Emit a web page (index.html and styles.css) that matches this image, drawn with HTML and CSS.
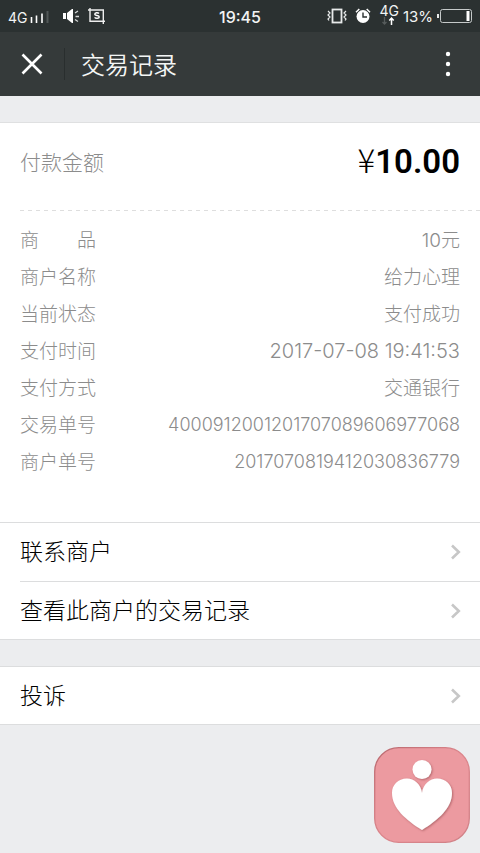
FILE: index.html
```html
<!DOCTYPE html>
<html lang="zh-CN">
<head>
<meta charset="utf-8">
<meta name="viewport" content="width=device-width, initial-scale=1">
<title>交易记录</title>
<link rel="stylesheet" href="styles.css">
</head>
<body>
<div class="status">
  <div class="status-side">
    <span class="network">4G</span>
    <svg class="signal" width="20" height="12" viewBox="0 0 20 12" aria-hidden="true"><path d="M1.500 6v6M6.500 4.500V12M12 2.500V12" stroke="#fff" stroke-width="1.600"/><path d="M17.500 0v12" stroke="#515757" stroke-width="2"/></svg>
    <svg class="speaker" width="18" height="16" viewBox="0 0 18 16" aria-hidden="true"><path d="M1 5h3v6H1zM5 5l5-4h1v14h-1l-5-4z" fill="#fff"/><path d="M13 5l3-2M13.500 8.500H17M13 11.500l3 2" stroke="#d5d8d8" stroke-width="1.300"/></svg>
    <svg width="18" height="16" viewBox="0 0 18 16" aria-hidden="true"><path d="M0 2h15.300v14M2 0v13.300h15" fill="none" stroke="#eee" stroke-width="1.400"/><path d="M11 5.500C10 4.300 6.800 4.300 6.800 6.200c0 1.800 4.400.9 4.400 2.800 0 1.800-3.600 1.700-4.600.4" fill="none" stroke="#fff" stroke-width="1.500"/></svg>
  </div>
  <time class="clock">19:45</time>
  <div class="status-side status-right">
    <svg width="20" height="16" viewBox="0 0 20 16" aria-hidden="true"><rect x="5.500" y="1.500" width="9" height="13" fill="none" stroke="#e8eaea" stroke-width="1.800"/><path d="M1 3l2 2-2 2 2 2-2 2 1 1.500M19 3l-2 2 2 2-2 2 2 2-1 1.500" fill="none" stroke="#e8eaea" stroke-width="1.200"/></svg>
    <svg class="alarm" width="16" height="16" viewBox="0 0 16 16" aria-hidden="true"><circle cx="8" cy="8.500" r="6.500" fill="#fff"/><path d="M1 4.200L4.300 1M15 4.200L11.700 1" stroke="#fff" stroke-width="1.500"/><path d="M8 4.500V9h4" fill="none" stroke="#2b3131" stroke-width="1.400"/></svg>
    <span class="data"><span class="data-label">4G</span><svg width="14" height="8" viewBox="0 0 14 8" aria-hidden="true"><path d="M2.500 0v7M.5 5l2 2 2-2" fill="none" stroke="#565c5c" stroke-width="1.300"/><path d="M9.500 8V1M7.300 3.500l2.200-2.400 2.200 2.400" fill="none" stroke="#fff" stroke-width="1.500"/></svg></span>
    <span class="percent">13%</span>
    <svg width="35" height="14" viewBox="0 0 35 14" aria-hidden="true"><path d="M1 5v4" stroke="#e8eaea" stroke-width="2"/><rect x="3.500" y=".5" width="31" height="13" rx="2" fill="none" stroke="#c5c9c9"/><path d="M31 2v10" stroke="#fff" stroke-width="3"/></svg>
  </div>
</div>
<header class="nav">
  <button class="close" aria-label="关闭"><svg width="22" height="22" viewBox="0 0 22 22"><path d="M1.500 1.500l19 19M20.500 1.500l-19 19" stroke="#fff" stroke-width="2.600"/></svg></button>
  <h1>交易记录</h1>
  <button class="more" aria-label="更多"><svg width="6" height="26" viewBox="0 0 6 26" fill="#fff"><circle cx="3" cy="3" r="2.200"/><circle cx="3" cy="13" r="2.200"/><circle cx="3" cy="23" r="2.200"/></svg></button>
</header>
<main>
  <section class="bill">
    <div class="total"><span>付款金额</span><strong><span class="yen">¥</span>10.00</strong></div>
    <svg class="divider" height="1" aria-hidden="true"><path d="M0 .5H2000" stroke="#dedede" stroke-dasharray="4 4"/></svg>
    <dl>
      <div class="row"><dt><span>商</span><span>品</span></dt><dd>10元</dd></div>
      <div class="row"><dt>商户名称</dt><dd>给力心理</dd></div>
      <div class="row"><dt>当前状态</dt><dd>支付成功</dd></div>
      <div class="row"><dt>支付时间</dt><dd class="digits">2017-07-08 19:41:53</dd></div>
      <div class="row"><dt>支付方式</dt><dd>交通银行</dd></div>
      <div class="row"><dt>交易单号</dt><dd class="digits serial">4000912001201707089606977068</dd></div>
      <div class="row"><dt>商户单号</dt><dd class="digits serial">2017070819412030836779</dd></div>
    </dl>
  </section>
  <nav class="links">
    <a href="#contact"><span>联系商户</span><svg width="12" height="16" viewBox="0 0 12 16" aria-hidden="true"><path d="M2 1.500L8.800 8 2 14.500" fill="none" stroke="#c7c7c7" stroke-width="2.600"/></svg></a>
    <a href="#records"><span>查看此商户的交易记录</span><svg width="12" height="16" viewBox="0 0 12 16" aria-hidden="true"><path d="M2 1.500L8.800 8 2 14.500" fill="none" stroke="#c7c7c7" stroke-width="2.600"/></svg></a>
  </nav>
  <nav class="links complaint">
    <a href="#complaint"><span>投诉</span><svg width="12" height="16" viewBox="0 0 12 16" aria-hidden="true"><path d="M2 1.500L8.800 8 2 14.500" fill="none" stroke="#c7c7c7" stroke-width="2.600"/></svg></a>
  </nav>
</main>
<svg class="badge" width="96" height="96" viewBox="0 0 96 96" role="img" aria-label="爱心">
  <defs><filter id="shade" x="-20%" y="-20%" width="140%" height="140%"><feDropShadow dx="1" dy="1" stdDeviation="1.200" flood-color="#8d4449" flood-opacity=".6"/></filter>
  <linearGradient id="rim" x1="0" y1="0" x2="1" y2="1"><stop offset="0" stop-color="#b9686e"/><stop offset=".5" stop-color="#dc868c"/><stop offset="1" stop-color="#d08086"/></linearGradient></defs>
  <rect x=".7" y=".7" width="94.600" height="94.600" rx="24" fill="#ec9aa0" stroke="url(#rim)" stroke-width="1.300"/>
  <g fill="#fff" filter="url(#shade)"><circle cx="48" cy="22.500" r="9.500"/><path d="M48 46C47 37 40 31.500 33 31.500C24 31.500 18 38 18 46C18 61 32 73 48 83C64 73 78 61 78 46C78 38 72 31.500 63 31.500C56 31.500 49 37 48 46Z"/></g>
</svg>
</body>
</html>
```
FILE: styles.css
```css
* { box-sizing: border-box; }

body {
  margin: 0;
  min-height: 100vh;
  background: #ecedef;
  color: #000;
  font-family: Inter, "Noto Sans CJK SC", sans-serif;
}

button { border: 0; padding: 0; background: none; }
svg { display: block; flex: none; }

.status {
  display: grid;
  grid-template-columns: 1fr auto 1fr;
  align-items: center;
  height: 32px;
  padding: 0 8px;
  background: #2b3131;
  color: #f2f4f4;
}
.status-side { display: flex; align-items: center; }
.status-right { justify-content: flex-end; gap: 4px; }
.network { font-size: 14px; line-height: 16px; padding-top: 4px; }
.signal { margin: 2px 12px 0 2px; }
.speaker { margin-right: 8px; }
.clock { padding-top: 2px; font-size: 16px; font-weight: 500; }
.alarm { margin: 0 4px; }
.data { display: flex; flex-direction: column; align-items: center; padding-bottom: 2px; }
.data-label { font-size: 14px; line-height: 12px; }
.percent { font-size: 15px; }

.nav {
  display: flex;
  align-items: center;
  height: 64px;
  background: #353a3a;
  color: #f4f6f5;
}
.close {
  display: grid;
  place-items: center;
  width: 65px;
  height: 32px;
  border-right: 1px solid #292e2e;
}
.nav h1 {
  flex: 1;
  margin: 0 0 0 16px;
  padding-top: 4px;
  font-size: 24px;
  line-height: 32px;
  font-weight: 350;
}
.more { padding: 0 29px; }

.bill {
  margin-top: 26px;
  padding-bottom: 32px;
  background: #fff;
  border-top: 1px solid #dfe0e1;
  color: #8c8c8c;
  font-weight: 300;
}
.total {
  display: flex;
  align-items: center;
  justify-content: space-between;
  height: 87px;
  padding: 0 20px 12px;
  font-size: 21px;
}
.total strong {
  color: #000;
  font: 600 33px/40px Roboto, sans-serif;
}
.yen { font-family: "Noto Sans CJK SC", sans-serif; font-weight: 300; }
.divider { width: calc(100% - 20px); margin-left: 20px; }

dl { margin: 0; padding: 9px 20px 11px; }
.row {
  display: flex;
  align-items: center;
  justify-content: space-between;
  height: 37px;
  font-size: 19px;
}
dt { display: flex; justify-content: space-between; width: 76px; }
dd { margin: 0; }
.digits { padding-top: 2px; font-size: 20px; }
.serial { font-size: 18px; }

.links { background: #fff; border: solid #dcddde; border-width: 1px 0; }
.links a {
  display: flex;
  align-items: center;
  justify-content: space-between;
  height: 58px;
  padding-right: 18px;
  margin-left: 20px;
  color: #000;
  font-size: 23px;
  font-weight: 300;
  text-decoration: none;
}
.links span { padding-bottom: 4px; }
.links a + a { border-top: 1px solid #dcddde; }
.complaint { margin-top: 26px; }
.complaint a { height: 57px; }

.badge { position: fixed; right: 10px; bottom: 10px; }
```
